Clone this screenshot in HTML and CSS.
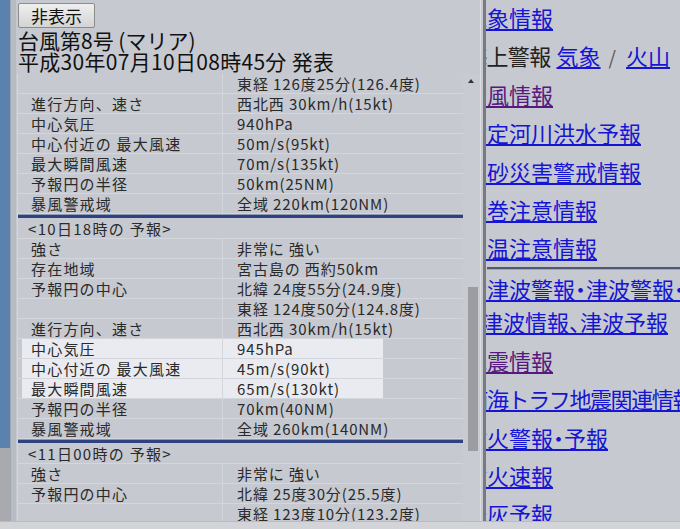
FILE: index.html
```html
<!DOCTYPE html>
<html lang="ja">
<head>
<meta charset="utf-8">
<title>台風第8号</title>
<link rel="stylesheet" href="styles.css">
</head>
<body>
<div class="screen">
  <div class="main">
    <div class="edge"><div class="edge-blue"></div><div class="edge-grey"></div></div>
    <div class="strip"></div>
    <div class="left">
      <button class="hide-btn" type="button">非表示</button>
      <h1 class="title"><span class="t1">台風第8号 (マリア)</span><span class="t2">平成30年07月10日08時45分 発表</span></h1>
      <div class="scroller">
        <div class="table-wrap">
          <div class="highlight"></div>
          <div class="row"><div class="k"></div><div class="v">東経 126度25分(126.4度)</div></div>
          <div class="row"><div class="k">進行方向、速さ</div><div class="v">西北西 30km/h(15kt)</div></div>
          <div class="row"><div class="k">中心気圧</div><div class="v">940hPa</div></div>
          <div class="row"><div class="k">中心付近の 最大風速</div><div class="v">50m/s(95kt)</div></div>
          <div class="row"><div class="k">最大瞬間風速</div><div class="v">70m/s(135kt)</div></div>
          <div class="row"><div class="k">予報円の半径</div><div class="v">50km(25NM)</div></div>
          <div class="row"><div class="k">暴風警戒域</div><div class="v">全域 220km(120NM)</div></div>
          <div class="sep"></div>
          <div class="head">&lt;10日18時の 予報&gt;</div>
          <div class="row"><div class="k">強さ</div><div class="v">非常に 強い</div></div>
          <div class="row"><div class="k">存在地域</div><div class="v">宮古島の 西約50km</div></div>
          <div class="row"><div class="k">予報円の中心</div><div class="v">北緯 24度55分(24.9度)</div></div>
          <div class="row"><div class="k"></div><div class="v">東経 124度50分(124.8度)</div></div>
          <div class="row"><div class="k">進行方向、速さ</div><div class="v">西北西 30km/h(15kt)</div></div>
          <div class="row"><div class="k">中心気圧</div><div class="v">945hPa</div></div>
          <div class="row"><div class="k">中心付近の 最大風速</div><div class="v">45m/s(90kt)</div></div>
          <div class="row"><div class="k">最大瞬間風速</div><div class="v">65m/s(130kt)</div></div>
          <div class="row"><div class="k">予報円の半径</div><div class="v">70km(40NM)</div></div>
          <div class="row"><div class="k">暴風警戒域</div><div class="v">全域 260km(140NM)</div></div>
          <div class="sep"></div>
          <div class="head">&lt;11日00時の 予報&gt;</div>
          <div class="row"><div class="k">強さ</div><div class="v">非常に 強い</div></div>
          <div class="row"><div class="k">予報円の中心</div><div class="v">北緯 25度30分(25.5度)</div></div>
          <div class="row"><div class="k"></div><div class="v">東経 123度10分(123.2度)</div></div>
        </div>
        <div class="vscroll"><span class="arrow"></span><div class="thumb"></div></div>
      </div>
    </div>
    <div class="divider"></div>
    <div class="right">
      <a class="item" href="#">気象情報</a>
      <div class="item cut"><span class="plain">海上警報</span> <a href="#" class="inl">気象</a><span class="sl">/</span><a href="#" class="inl">火山</a></div>
      <a class="item visited" href="#">台風情報</a>
      <a class="item" href="#">指定河川洪水予報</a>
      <a class="item" href="#">土砂災害警戒情報</a>
      <a class="item" href="#">竜巻注意情報</a>
      <a class="item last" href="#">高温注意情報</a>
      <div class="rule"></div>
      <a class="item wrap1" href="#">大津波警報・津波警報・津波注意報・</a>
      <a class="item wrap2" href="#">津波情報、津波予報</a>
      <a class="item visited" href="#">地震情報</a>
      <a class="item tight" href="#">南海トラフ地震関連情報</a>
      <a class="item" href="#">噴火警報・予報</a>
      <a class="item" href="#">噴火速報</a>
      <a class="item" href="#">降灰予報</a>
    </div>
  </div>
  <div class="hbar"></div>
</div>
</body>
</html>
```

FILE: styles.css
```css
* { box-sizing: border-box; }
html, body { margin: 0; padding: 0; }
body {
  background: #c6c9d0;
  font-family: "Noto Sans CJK JP", "Noto Sans", sans-serif;
  color: #222;
}
.screen { width: 680px; height: 529px; overflow: hidden; display: flex; flex-direction: column; }
.main { height: 521px; display: flex; flex: none; }
.edge { width: 10px; display: flex; flex-direction: column; flex: none; }
.edge-blue { height: 448px; background: #5b81ad; }
.edge-grey { flex: 1; background: #a8aaae; }
.strip { width: 6px; flex: none; background: #b7bbc3; border-left: 1px solid #a3a8b2; }
.left {
  width: 465px; flex: none; padding-left: 1px;
  border-right: 1px solid #dcdee2;
  display: flex; flex-direction: column;
}
.hide-btn {
  margin: 3px 0 0 1px; width: 77px; height: 25px; padding: 0;
  font-family: inherit; font-size: 17px; line-height: 23px; color: #111;
  background: linear-gradient(#efefef, #d4d4d4);
  border: 1px solid #8c8c8c; border-radius: 2px;
  align-self: flex-start;
}
.title {
  margin: 2px 0 2px 1px; font-weight: normal; font-size: 21px;
  color: #111; white-space: nowrap;
}
.t1, .t2 { display: block; height: 21px; line-height: 21px; }
.t2 { letter-spacing: 0.3px; }
.scroller { flex: 1; display: flex; overflow: hidden; }
.table-wrap {
  position: relative; width: 446px; flex: none;
  border-left: 1px solid #d3d6dc;
  font-size: 15px; color: #2a2a2a;
}
.highlight {
  position: absolute; left: 4px; top: 265px; width: 361px; height: 60px;
  background: #e9ebf0;
}
.row, .head, .sep { position: relative; }
.row {
  display: grid; grid-template-columns: 205px 1fr;
  height: 20px; border-bottom: 1px solid #d3d6dc;
  line-height: 20px; white-space: nowrap;
}
.k { padding-left: 13px; letter-spacing: 1.2px; border-right: 1px solid #d3d6dc; }
.v { padding-left: 14px; letter-spacing: 0.9px; }
.sep { height: 4px; border-top: 1px solid #8e97b4; background: #2e427f; }
.head {
  height: 21px; line-height: 21px; padding-left: 10px;
  border-bottom: 1px solid #d3d6dc; letter-spacing: 1.3px;
}
.vscroll { position: relative; width: 17px; flex: none; background: #c8cbd1; }
.arrow {
  position: absolute; left: 5px; top: 5px; width: 0; height: 0;
  border-left: 3px solid transparent; border-right: 3px solid transparent;
  border-bottom: 4px solid #333;
}
.thumb {
  position: absolute; left: 5px; top: 213px; width: 10px; height: 164px;
  background: #9b9da3;
}
.divider { width: 3px; margin-left: 2px; flex: none; background: #777a81; }
.right {
  flex: 1; overflow: hidden; padding: 1px 0 0 1px; white-space: nowrap;
  font-size: 22px; line-height: 33px; font-feature-settings: "halt";
}
.item { display: block; height: 33px; margin: 0 0 5.4px -22px; color: #1515d3; text-decoration: underline; }
.item.last { margin-bottom: 3px; }
.item.cut { text-decoration: none; }
.item.tight { letter-spacing: -1.4px; margin-left: -20.6px; }
.plain { color: #222; letter-spacing: -0.6px; }
.inl { color: #1515d3; text-decoration: underline; margin-left: 1px; }
.sl { color: #555; margin: 0 9px 0 8px; font-size: 19px; }
.visited { color: #55197f; }
.rule { height: 3px; margin: 0 0 2px 0; border-top: 2px solid #4e5874; border-bottom: 1px solid #a3a8b6; }
.wrap1 { margin-bottom: 0; }
.wrap2 { margin-left: -6px; }
.hbar { flex: 1; background: #d3d4d7; border-top: 1px solid #b9bbbf; }
```
